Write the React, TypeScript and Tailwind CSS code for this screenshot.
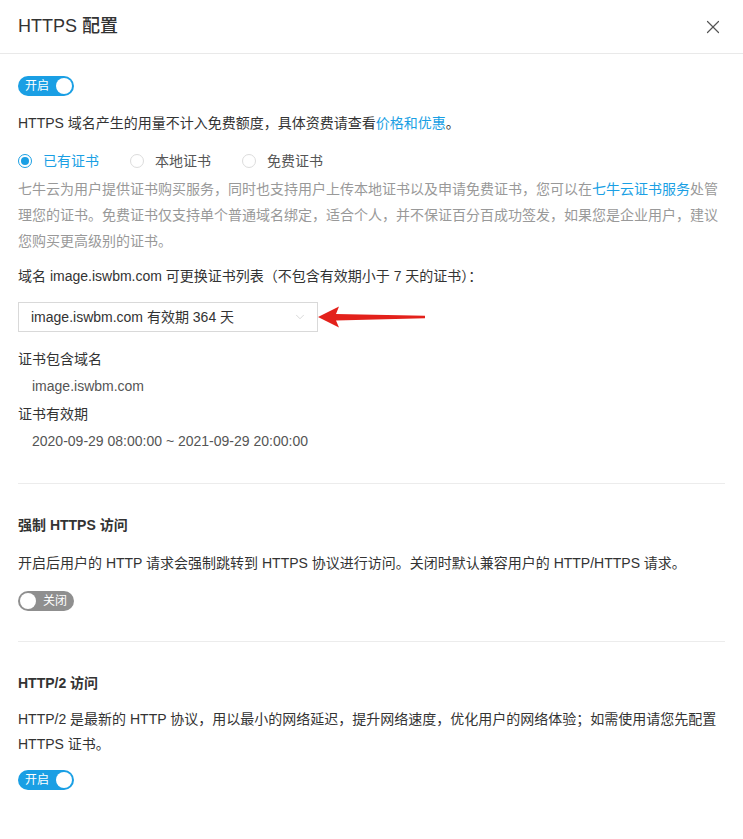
import { X, ChevronDown } from 'lucide-react';

const font = { fontFamily: '"Liberation Sans", "Noto Sans CJK SC", sans-serif' };

function Toggle({ on }: { on: boolean }) {
  if (on) {
    return (
      <div className="flex h-[20px] w-[56px] items-center justify-between rounded-full bg-[#1a9fe4] pl-[7px] pr-[2px]">
        <span className="text-[12px] leading-none text-white">开启</span>
        <span className="h-[16px] w-[16px] rounded-full bg-white" />
      </div>
    );
  }
  return (
    <div className="flex h-[20px] w-[56px] items-center justify-between rounded-full bg-[#8f8f8f] pl-[2px] pr-[7px]">
      <span className="h-[16px] w-[16px] rounded-full bg-white" />
      <span className="text-[12px] leading-none text-white">关闭</span>
    </div>
  );
}

function Radio({ label, checked }: { label: string; checked?: boolean }) {
  return (
    <label className="flex items-center gap-[11px]">
      {checked ? (
        <span className="flex h-[14px] w-[14px] items-center justify-center rounded-full border border-[#1a9fe4]">
          <span className="h-[8px] w-[8px] rounded-full bg-[#1a9fe4]" />
        </span>
      ) : (
        <span className="h-[14px] w-[14px] rounded-full border border-[#dcdcdc]" />
      )}
      <span className={checked ? 'text-[#1a9fe4]' : 'text-[#555]'}>{label}</span>
    </label>
  );
}

export default function App() {
  return (
    <div className="min-h-[839px] w-[743px] bg-white text-[14px] text-[#333]" style={font}>
      {/* 头部 */}
      <div className="flex h-[54px] items-center justify-between border-b border-[#e9e9e9] pl-[18px] pr-[19px]">
        <h2 className="text-[18px] font-medium text-[#333]">HTTPS 配置</h2>
        <X className="h-[22px] w-[22px] text-[#555]" strokeWidth={1.3} />
      </div>

      <div className="px-[18px]">
        <div className="mt-[22px]">
          <Toggle on />
        </div>
        <p className="mt-[16px] leading-[22px]">
          HTTPS 域名产生的用量不计入免费额度，具体资费请查看<a className="text-[#1a9fe4]">价格和优惠</a>。
        </p>

        <div className="mt-[16px] flex items-center gap-[31px] leading-[22px]">
          <Radio label="已有证书" checked />
          <Radio label="本地证书" />
          <Radio label="免费证书" />
        </div>

        <p className="mt-[4px] leading-[26px] text-[#999]">
          七牛云为用户提供证书购买服务，同时也支持用户上传本地证书以及申请免费证书，您可以在<a className="text-[#1a9fe4]">七牛云证书服务</a>处管理您的证书。免费证书仅支持单个普通域名绑定，适合个人，并不保证百分百成功签发，如果您是企业用户，建议您购买更高级别的证书。
        </p>

        <p className="mt-[11px] leading-[22px]">域名 image.iswbm.com 可更换证书列表（不包含有效期小于 7 天的证书）：</p>

        <div className="mt-[15px] flex items-center">
          <div className="flex h-[30px] w-[300px] items-center justify-between border border-[#d9d9d9] pl-[12px] pr-[10px]">
            <span>image.iswbm.com 有效期 364 天</span>
            <ChevronDown className="h-[14px] w-[14px] text-[#c8c8c8]" strokeWidth={1.2} />
          </div>
          <svg width="110" height="26" viewBox="0 0 110 26" className="shrink-0">
            <path d="M0 13 L21 2.5 L18 10 L107 11.8 L107 14.2 L18 16.5 L21 23.5 Z" fill="#e3211b" />
          </svg>
        </div>

        <p className="mt-[16px] leading-[22px]">证书包含域名</p>
        <p className="mt-[5px] pl-[14px] leading-[22px] text-[#555]">image.iswbm.com</p>
        <p className="mt-[6px] leading-[22px]">证书有效期</p>
        <p className="mt-[5px] pl-[14px] leading-[22px] text-[#555]">2020-09-29 08:00:00 ~ 2021-09-29 20:00:00</p>

        <div className="mt-[31px] h-px bg-[#ececec]" />

        <h3 className="mt-[30px] font-bold leading-[22px]">强制 HTTPS 访问</h3>
        <p className="mt-[16px] leading-[22px]">开启后用户的 HTTP 请求会强制跳转到 HTTPS 协议进行访问。关闭时默认兼容用户的 HTTP/HTTPS 请求。</p>
        <div className="mt-[17px]">
          <Toggle on={false} />
        </div>

        <div className="mt-[30px] h-px bg-[#ececec]" />

        <h3 className="mt-[30px] font-bold leading-[22px]">HTTP/2 访问</h3>
        <p className="mt-[13px] leading-[25px]">
          HTTP/2 是最新的 HTTP 协议，用以最小的网络延迟，提升网络速度，优化用户的网络体验；如需使用请您先配置 HTTPS 证书。
        </p>
        <div className="mt-[13px]">
          <Toggle on />
        </div>
      </div>
    </div>
  );
}
